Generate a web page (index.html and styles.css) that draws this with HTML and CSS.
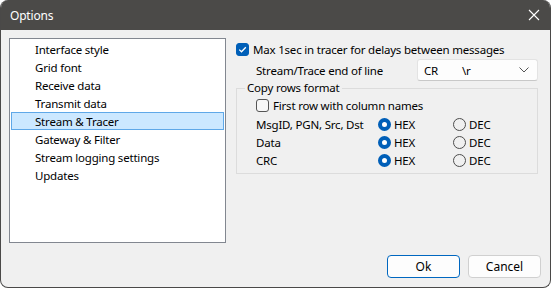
FILE: index.html
```html
<!DOCTYPE html>
<html lang="en">

<head>
    <meta charset="UTF-8" />
    <title>Options</title>
    <link rel="stylesheet" href="styles.css">
</head>

<body>
    <div class="window">
        <div class="titlebar">
            <span class="title">Options</span>
            <svg class="close" width="12" height="12" viewBox="0 0 12 12">
                <path d="M1 1 L11 11 M11 1 L1 11" stroke="#fff" stroke-width="1.1" fill="none" />
            </svg>
        </div>
        <div class="content">
            <div class="main">
                <ul class="page-list">
                    <li>Interface style</li>
                    <li>Grid font</li>
                    <li>Receive data</li>
                    <li>Transmit data</li>
                    <li class="active">Stream &amp; Tracer</li>
                    <li>Gateway &amp; Filter</li>
                    <li>Stream logging settings</li>
                    <li>Updates</li>
                </ul>
                <div class="page">
                    <label class="check-row">
                        <span class="check checked">
                            <svg width="9" height="9" viewBox="0 0 9 9">
                                <path d="M1.2 4.6 L3.5 6.8 L7.8 2.2" stroke="#fff" stroke-width="1.3" fill="none" />
                            </svg>
                        </span>
                        Max 1sec in tracer for delays between messages
                    </label>
                    <div class="eol-row">
                        <span class="eol-label">Stream/Trace end of line</span>
                        <div class="combo">
                            <span class="combo-code">CR</span>
                            <span class="combo-esc">\r</span>
                            <svg class="chevron" width="10" height="6" viewBox="0 0 10 6">
                                <path d="M0.5 0.5 L5 5 L9.5 0.5" stroke="#555" stroke-width="1" fill="none" />
                            </svg>
                        </div>
                    </div>
                    <fieldset class="group">
                        <legend>Copy rows format</legend>
                        <label class="check-row">
                            <span class="check"></span>
                            First row with column names
                        </label>
                        <div class="format-row">
                            <span class="format-name">MsgID, PGN, Src, Dst</span>
                            <span class="radio-opt"><span class="radio on"></span>HEX</span>
                            <span class="radio-opt"><span class="radio"></span>DEC</span>
                        </div>
                        <div class="format-row">
                            <span class="format-name">Data</span>
                            <span class="radio-opt"><span class="radio on"></span>HEX</span>
                            <span class="radio-opt"><span class="radio"></span>DEC</span>
                        </div>
                        <div class="format-row">
                            <span class="format-name">CRC</span>
                            <span class="radio-opt"><span class="radio on"></span>HEX</span>
                            <span class="radio-opt"><span class="radio"></span>DEC</span>
                        </div>
                    </fieldset>
                </div>
            </div>
            <div class="buttons">
                <button class="btn default">Ok</button>
                <button class="btn">Cancel</button>
            </div>
        </div>
    </div>
</body>

</html>
```

FILE: styles.css
```css
* {
    box-sizing: border-box;
}

body {
    margin: 0;
    background: #fff;
    font-family: "Noto Sans", "Liberation Sans", sans-serif;
    font-size: 11.5px;
    letter-spacing: -0.2px;
    color: #000;
}

.window {
    width: 551px;
    height: 288px;
    background: #f0f0f0;
    border: 1px solid #4a4948;
    border-top: none;
    border-radius: 8px;
    overflow: hidden;
    display: flex;
    flex-direction: column;
}

.titlebar {
    height: 30px;
    background: #4b4a48;
    color: #fff;
    display: flex;
    align-items: center;
    justify-content: space-between;
    padding: 0 10px 0 9px;
    flex-shrink: 0;
}

.title {
    font-size: 12px;
}

.content {
    flex: 1;
    display: flex;
    flex-direction: column;
    padding: 8px 9px 9px 8px;
}

.main {
    display: flex;
    gap: 10px;
}

.page-list {
    margin: 0;
    padding: 1px;
    list-style: none;
    width: 217px;
    height: 205px;
    background: #fff;
    border: 1px solid #828790;
}

.page-list li {
    height: 18px;
    line-height: 17px;
    padding-left: 23px;
    border: 1px solid transparent;
}

.page-list li.active {
    background: #cce8ff;
    border-color: #5fa8e8;
}

.page {
    width: 302px;
    display: flex;
    flex-direction: column;
    padding-top: 4px;
}

.check-row {
    display: flex;
    align-items: center;
    gap: 4px;
    height: 14px;
}

.check {
    width: 13px;
    height: 13px;
    border: 1px solid #555;
    border-radius: 3px;
    background: #f7f7f7;
    display: flex;
    align-items: center;
    justify-content: center;
}

.check.checked {
    background: #005fb8;
    border-color: #005fb8;
}

.eol-row {
    display: flex;
    align-items: center;
    margin-top: 3px;
    padding-left: 20px;
}

.eol-label {
    width: 161px;
}

.combo {
    width: 121px;
    height: 22px;
    background: #fdfdfd;
    border: 1px solid #e3e3e3;
    border-bottom-color: #c8c8c8;
    border-radius: 3px;
    display: flex;
    align-items: center;
    padding: 0 8px 0 6px;
}

.combo-code {
    width: 38px;
}

.combo-esc {
    flex: 1;
}

.group {
    margin: 0;
    border: 1px solid #dcdcdc;
    padding: 3px 0 5px 19px;
    height: 93px;
}

.group legend {
    padding: 0 2px;
    margin-left: -11px;
    line-height: 14px;
}

.group .check-row {
    margin-bottom: 3px;
}

.format-row {
    display: flex;
    align-items: center;
    height: 18px;
}

.format-name {
    width: 122px;
}

.radio-opt {
    width: 75px;
    display: flex;
    align-items: center;
    gap: 3px;
}

.radio {
    width: 13px;
    height: 13px;
    border-radius: 50%;
    border: 1px solid #4d4d4d;
}

.radio.on {
    border: 4px solid #005fb8;
    background: #fff;
}

.buttons {
    margin-top: auto;
    display: flex;
    justify-content: flex-end;
    gap: 8px;
}

.btn {
    width: 73px;
    height: 23px;
    font-family: inherit;
    font-size: 12px;
    color: #000;
    background: #fdfdfd;
    border: 1px solid #d0d0d0;
    border-radius: 4px;
}

.btn.default {
    border-color: #0067c0;
}
```
